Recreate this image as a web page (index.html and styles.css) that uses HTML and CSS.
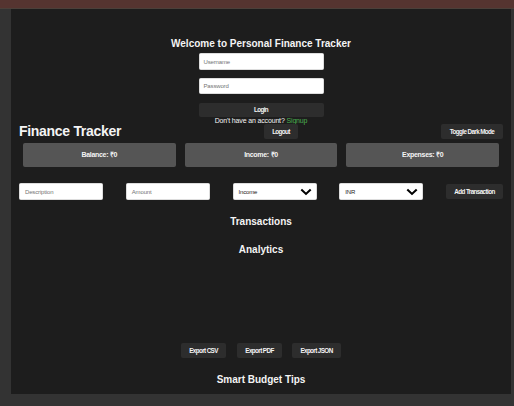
FILE: index.html
```html
<!DOCTYPE html>
<html lang="en">
<head>
<meta charset="utf-8">
<title>Personal Finance Tracker</title>
<link rel="stylesheet" href="styles.css">
</head>
<body>
<div class="topbar"></div>
<main class="panel">
  <section class="auth">
    <h2 class="welcome">Welcome to Personal Finance Tracker</h2>
    <div class="field username"><span>Username</span></div>
    <div class="field password"><span>Password</span></div>
    <button class="btn login">Login</button>
    <p class="signup">Don't have an account? <a>Signup</a></p>
  </section>
  <header class="header">
    <h1>Finance Tracker</h1>
    <button class="btn logout">Logout</button>
    <button class="btn toggle">Toggle Dark Mode</button>
  </header>
  <section class="cards">
    <div class="card">Balance: ₹0</div>
    <div class="card">Income: ₹0</div>
    <div class="card">Expenses: ₹0</div>
  </section>
  <section class="entry">
    <div class="field">Description</div>
    <div class="field">Amount</div>
    <div class="field select">Income<svg viewBox="0 0 12 8"><path d="M1.3 1.5 6 5.9l4.7-4.4"/></svg></div>
    <div class="field select">INR<svg viewBox="0 0 12 8"><path d="M1.3 1.5 6 5.9l4.7-4.4"/></svg></div>
    <button class="btn add">Add Transaction</button>
  </section>
  <h2 class="transactions">Transactions</h2>
  <h2 class="analytics">Analytics</h2>
  <section class="exports">
    <button class="btn csv">Export CSV</button>
    <button class="btn pdf">Export PDF</button>
    <button class="btn json">Export JSON</button>
  </section>
  <h2 class="tips">Smart Budget Tips</h2>
</main>
</body>
</html>
```
FILE: styles.css
```css
* { box-sizing: border-box; }
body {
  margin: 0;
  height: 406px;
  overflow: hidden;
  background: #333;
  color: #f4f4f4;
  font-family: "Liberation Sans", Arial, sans-serif;
}
.topbar { height: 9px; background: #553430; border-bottom: 1px solid #4b403a; }
.panel {
  width: 500px;
  height: 385px;
  margin-left: 11px;
  padding: 28px 8px 0;
  background: #1d1d1d;
}
h1, h2, p { margin: 0; font-weight: bold; white-space: nowrap; }
h2 { height: 14px; line-height: 14px; font-size: 10px; text-align: center; }
.auth {
  display: flex;
  flex-direction: column;
  align-items: center;
  height: 87px;
}
.welcome { margin-bottom: 2px; }
.field {
  display: flex;
  flex: none;
  align-items: center;
  width: 84px;
  height: 17px;
  padding: 0 5px;
  border: 1px solid #ddd;
  border-radius: 1.5px;
  background: #fff;
  color: #757575;
  font-size: 6px;
  letter-spacing: -0.15px;
}
.auth .field { width: 125px; padding: 0 4px; }
.auth .password { height: 16px; margin: 8px 0 9px; }
.btn {
  flex: none;
  height: 15px;
  padding: 0;
  border: 0;
  border-radius: 2px;
  background: #2d2d2d;
  color: #f4f4f4;
  font: bold 6.3px/15px "Liberation Sans", Arial, sans-serif;
  letter-spacing: -0.6px;
  text-align: center;
  white-space: nowrap;
}
.login { width: 125px; height: 14px; line-height: 14px; }
.signup { height: 8px; font-size: 7px; line-height: 8px; font-weight: normal; letter-spacing: -0.15px; }
.signup a { color: #4caf50; }
.header { display: grid; grid-template-columns: 245px 177px 62px; height: 15px; }
h1 { font-size: 14px; line-height: 15px; letter-spacing: -0.3px; }
.logout { width: 34px; }
.toggle { width: 62px; }
.cards { display: flex; gap: 9px; margin-top: 4px; padding: 0 4px; }
.card {
  flex: 1;
  height: 24px;
  border-radius: 2px;
  background: #555;
  font-size: 7px;
  font-weight: bold;
  line-height: 24px;
  letter-spacing: -0.3px;
  text-align: center;
}
.entry { display: flex; justify-content: space-between; align-items: center; margin-top: 16px; }
.select { justify-content: space-between; padding-right: 4px; color: #222; }
.select svg { width: 12px; height: 8px; fill: none; stroke: #000; stroke-width: 2.1; }
.add { width: 57px; }
.transactions { margin-top: 15px; }
.analytics { margin-top: 14px; }
.exports { display: flex; margin: 86px 0 0 162px; }
.csv { width: 45px; margin-right: 11px; }
.pdf { width: 45px; margin-right: 10px; }
.json { width: 49px; }
.tips { margin-top: 15px; }
```
